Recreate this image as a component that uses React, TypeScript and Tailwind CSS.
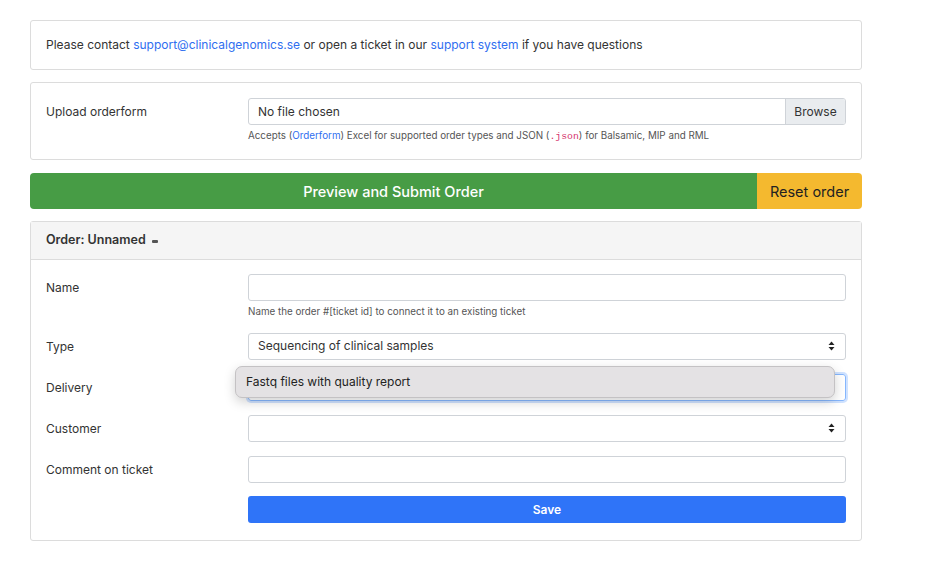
import React from "react";

const Arrows = () => (
  <svg width="7" height="10" viewBox="0 0 7 10" className="absolute right-[10px] top-1/2 -translate-y-1/2">
    <path d="M3.5 0.5 L6.5 4 H0.5 Z" fill="#222" />
    <path d="M3.5 9.5 L6.5 6 H0.5 Z" fill="#222" />
  </svg>
);

const Row = ({ label, children, className = "" }: { label: string; children: React.ReactNode; className?: string }) => (
  <div className={"flex " + className}>
    <div className="w-[202px] shrink-0 pt-[5px] text-[12px] text-[#333]">{label}</div>
    <div className="flex-1">{children}</div>
  </div>
);

export default function App() {
  return (
    <div className="min-h-[566px] bg-white px-[30px] pt-[20px] text-[#333]" style={{ fontFamily: "Inter, 'Noto Sans', sans-serif" }}>
      <div className="w-[832px]">
        <div className="flex h-[50px] items-center rounded-[3px] border border-[#dcdcdc] px-[15px] text-[12px]">
          <span>
            Please contact <span className="text-[#2f6ef0]">support@clinicalgenomics.se</span> or open a ticket in our{" "}
            <span className="text-[#2f6ef0]">support system</span> if you have questions
          </span>
        </div>

        <div className="mt-[12px] h-[78px] rounded-[3px] border border-[#dcdcdc] px-[15px] pt-[15px]">
          <Row label="Upload orderform">
            <div className="flex h-[27px] overflow-hidden rounded-[3px] border border-[#cfd3d8] text-[12px]">
              <div className="flex flex-1 items-center px-[9px] text-[#333]">No file chosen</div>
              <div className="flex w-[60px] items-center justify-center border-l border-[#cfd3d8] bg-[#e9ecef] text-[#333]">Browse</div>
            </div>
            <div className="mt-[4px] text-[9.8px] text-[#555]">
              Accepts (<span className="text-[#2f6ef0]">Orderform</span>) Excel for supported order types and JSON (
              <span className="text-[#d6336c]" style={{ fontFamily: "'Liberation Mono', monospace" }}>.json</span>) for Balsamic, MIP and RML
            </div>
          </Row>
        </div>

        <div className="mt-[13px] flex h-[36px] overflow-hidden rounded-[4px] text-[14.5px]">
          <div className="flex flex-1 items-center justify-center bg-[#479c45] pt-[1px] font-medium text-white">Preview and Submit Order</div>
          <div className="flex w-[105px] items-center justify-center bg-[#f4b92f] pt-[1px] text-[#222]">Reset order</div>
        </div>

        <div className="mt-[12px] h-[320px] rounded-[3px] border border-[#dcdcdc]">
          <div className="flex h-[38px] items-center gap-[6px] border-b border-[#dcdcdc] bg-[#f5f5f5] px-[15px] text-[12.5px] font-semibold text-[#333]">
            Order: Unnamed
            <span className="mt-[1px] inline-block h-[3px] w-[6px] rounded-[1px] bg-[#555]" />
          </div>
          <div className="relative px-[15px] pt-[14px]">
            <Row label="Name">
              <div className="h-[27px] rounded-[3px] border border-[#cfd3d8]" />
              <div className="mt-[4px] text-[9.8px] text-[#555]">Name the order #[ticket id] to connect it to an existing ticket</div>
            </Row>
            <Row label="Type" className="mt-[13px]">
              <div className="relative flex h-[27px] items-center rounded-[3px] border border-[#cfd3d8] px-[9px] text-[12px]">
                Sequencing of clinical samples
                <Arrows />
              </div>
            </Row>
            <Row label="Delivery" className="mt-[14px]">
              <div className="relative h-[27px] rounded-[3px] border border-[#86b7fe] shadow-[0_0_0_2px_rgba(13,110,253,0.2)]">
                <Arrows />
              </div>
            </Row>
            <Row label="Customer" className="mt-[14px]">
              <div className="relative h-[27px] rounded-[3px] border border-[#cfd3d8]">
                <Arrows />
              </div>
            </Row>
            <Row label="Comment on ticket" className="mt-[14px]">
              <div className="h-[27px] rounded-[3px] border border-[#cfd3d8]" />
            </Row>
            <div className="mt-[13px] flex">
              <div className="w-[202px] shrink-0" />
              <div className="flex h-[27px] flex-1 items-center justify-center rounded-[3px] bg-[#2f74f8] pt-[1px] text-[12px] font-semibold text-white">
                Save
              </div>
            </div>

            <div className="absolute left-[204px] top-[106px] flex h-[32px] w-[600px] items-center rounded-[7px] border border-[#c4c2c4] bg-[#e4e2e4] px-[10px] text-[12px] text-[#222] shadow-[0_4px_12px_rgba(0,0,0,0.18)]">
              Fastq files with quality report
            </div>
          </div>
        </div>
      </div>
    </div>
  );
}
